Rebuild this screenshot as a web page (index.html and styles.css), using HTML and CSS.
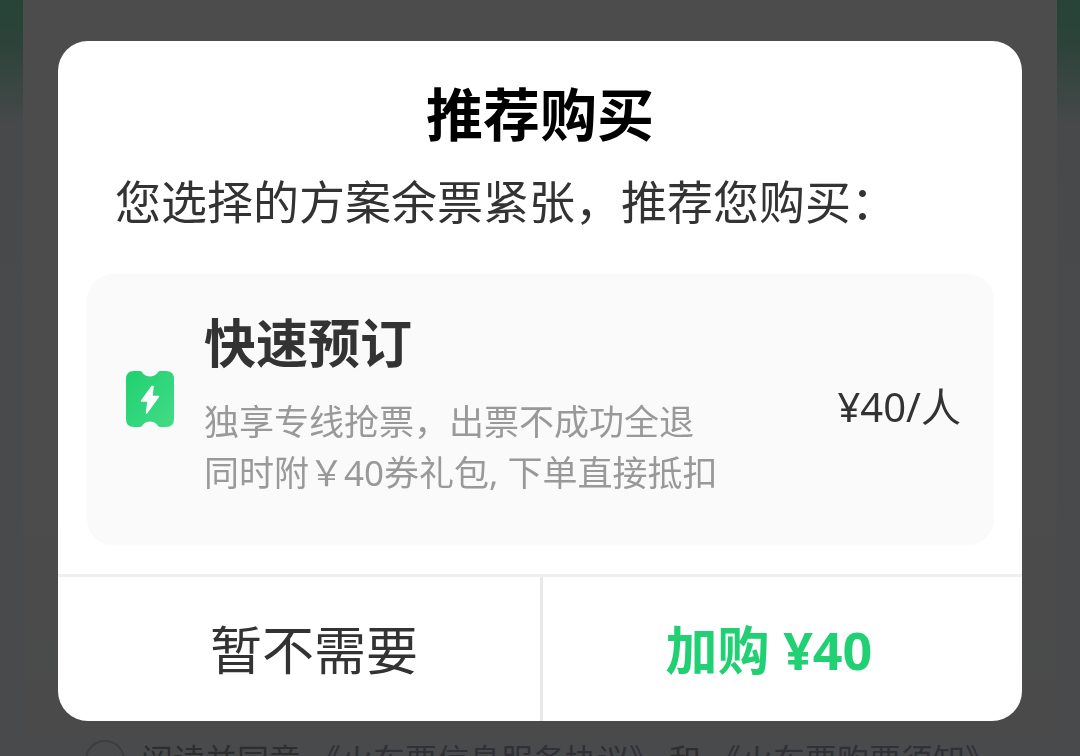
FILE: index.html
```
<!DOCTYPE html>
<html lang="zh-CN">
<head>
  <meta charset="UTF-8">
  <meta name="viewport" content="width=device-width, initial-scale=1.0">
  <title>推荐购买</title>
  <link rel="stylesheet" href="styles.css">
</head>
<body>
  <div class="page">
    <div class="panel"></div>
    <div class="agreement">
      <input type="checkbox" id="agree" checked>
      <label for="agree">阅读并同意</label>
      <a href="#service">《火车票信息服务协议》</a>
      <span>和</span>
      <a href="#notice">《火车票购票须知》</a>
    </div>
  </div>

  <div class="mask">
    <div class="dialog" role="dialog" aria-modal="true" aria-labelledby="dialogTitle">
      <h1 id="dialogTitle">推荐购买</h1>
      <p class="tip">您选择的方案余票紧张，推荐您购买：</p>

      <div class="card">
        <svg class="ticket" viewBox="0 0 48 56" aria-hidden="true">
          <defs>
            <linearGradient id="ticketFill" x1="0" y1="0" x2="1" y2="1">
              <stop offset="0" stop-color="#1fd170"/>
              <stop offset="1" stop-color="#43db87"/>
            </linearGradient>
          </defs>
          <path fill="url(#ticketFill)" d="M8 0H14C15.500 0 16 1 17 2.500C20.500 6.500 27.500 6.500 31 2.500C32 1 32.500 0 34 0H40Q48 0 48 8V48Q48 56 40 56H34C32.500 56 32 55 31 53.500C27.500 49.500 20.500 49.500 17 53.500C16 55 15.500 56 14 56H8Q0 56 0 48V8Q0 0 8 0Z"/>
          <path fill="#fff" stroke="#fff" stroke-width="1.500" stroke-linejoin="round" d="M26 15.500L15.500 30H22L20.500 42L32.500 25.500H26L27 15.500Z"/>
        </svg>
        <div class="info">
          <h2>快速预订</h2>
          <p>独享专线抢票，出票不成功全退<br>同时附￥40券礼包, 下单直接抵扣</p>
        </div>
        <div class="price">¥40/人</div>
      </div>

      <div class="actions">
        <button type="button" class="cancel">暂不需要</button>
        <button type="button" class="buy">加购 ¥40</button>
      </div>
    </div>
  </div>
</body>
</html>
```
FILE: styles.css
```
* {
  box-sizing: border-box;
}
body {
  margin: 0;
  overflow: hidden;
  font-family: "Noto Sans", "Noto Sans CJK SC", sans-serif;
  color: #333;
  background: #f4f8fb;
}
h1, h2, p {
  margin: 0;
}

/* 底层页面 */
.page {
  height: 100vh;
  overflow: hidden;
  padding: 0 23px;
  background: linear-gradient(#84dfb8 0, #92e0c0 40px, #f0f6fa 130px, #f6f9fb 100%);
}
.panel {
  height: calc(100vh - 18px);
  background: linear-gradient(#fefefe 60%, #f8f9fb 95%);
}
.agreement {
  display: flex;
  align-items: center;
  gap: 8px;
  padding-left: 62px;
  font-size: 32px;
  line-height: 44px;
  white-space: nowrap;
  color: #999;
}
.agreement input {
  appearance: none;
  display: grid;
  place-items: center;
  width: 40px;
  height: 40px;
  margin: 0 8px 0 0;
  border: 2px solid #ccc;
  border-radius: 50%;
}
.agreement input:checked::before {
  content: "";
  width: 10px;
  height: 18px;
  border: solid #999;
  border-width: 0 3px 3px 0;
  transform: rotate(45deg);
}
.agreement a {
  color: #a0a0b4;
  text-decoration: none;
}

/* 弹窗 */
.mask {
  position: fixed;
  inset: 0;
  padding: 41px 58px 0;
  background: rgba(0, 0, 0, 0.7);
}
.dialog {
  overflow: hidden;
  background: #fff;
  border-radius: 30px;
}
h1 {
  padding-top: 31px;
  font-size: 57px;
  line-height: 84px;
  text-align: center;
  color: #000;
}
.tip {
  padding: 11px 57px 0;
  font-size: 46px;
  line-height: 68px;
}
.card {
  display: flex;
  align-items: center;
  margin: 39px 28px 29px 29px;
  padding: 34px 33px 47px 39px;
  background: #fafafa;
  border-radius: 26px;
}
.ticket {
  flex: none;
  width: 48px;
  height: 56px;
  margin-bottom: 8px;
}
.info {
  flex: 1;
  margin-left: 30px;
}
.info h2 {
  font-size: 52px;
  line-height: 70px;
}
.info p {
  margin-top: 18px;
  font-size: 35px;
  line-height: 51px;
  color: #999;
}
.price {
  margin-top: 8px;
  font-size: 40px;
  line-height: 60px;
}
.actions {
  display: grid;
  grid-template-columns: 1fr 1fr;
  border-top: 3px solid #efefef;
}
.actions button {
  height: 144px;
  border: 0;
  background: none;
  font-family: inherit;
  font-size: 52px;
  color: #333;
  cursor: pointer;
}
.actions .cancel {
  padding: 0 0 4px 30px;
  border-right: 3px solid #e8e8e8;
  margin-right: -3px;
}
.actions .buy {
  padding: 0 24px 4px 0;
  font-weight: bold;
  color: #20d072;
}
```
